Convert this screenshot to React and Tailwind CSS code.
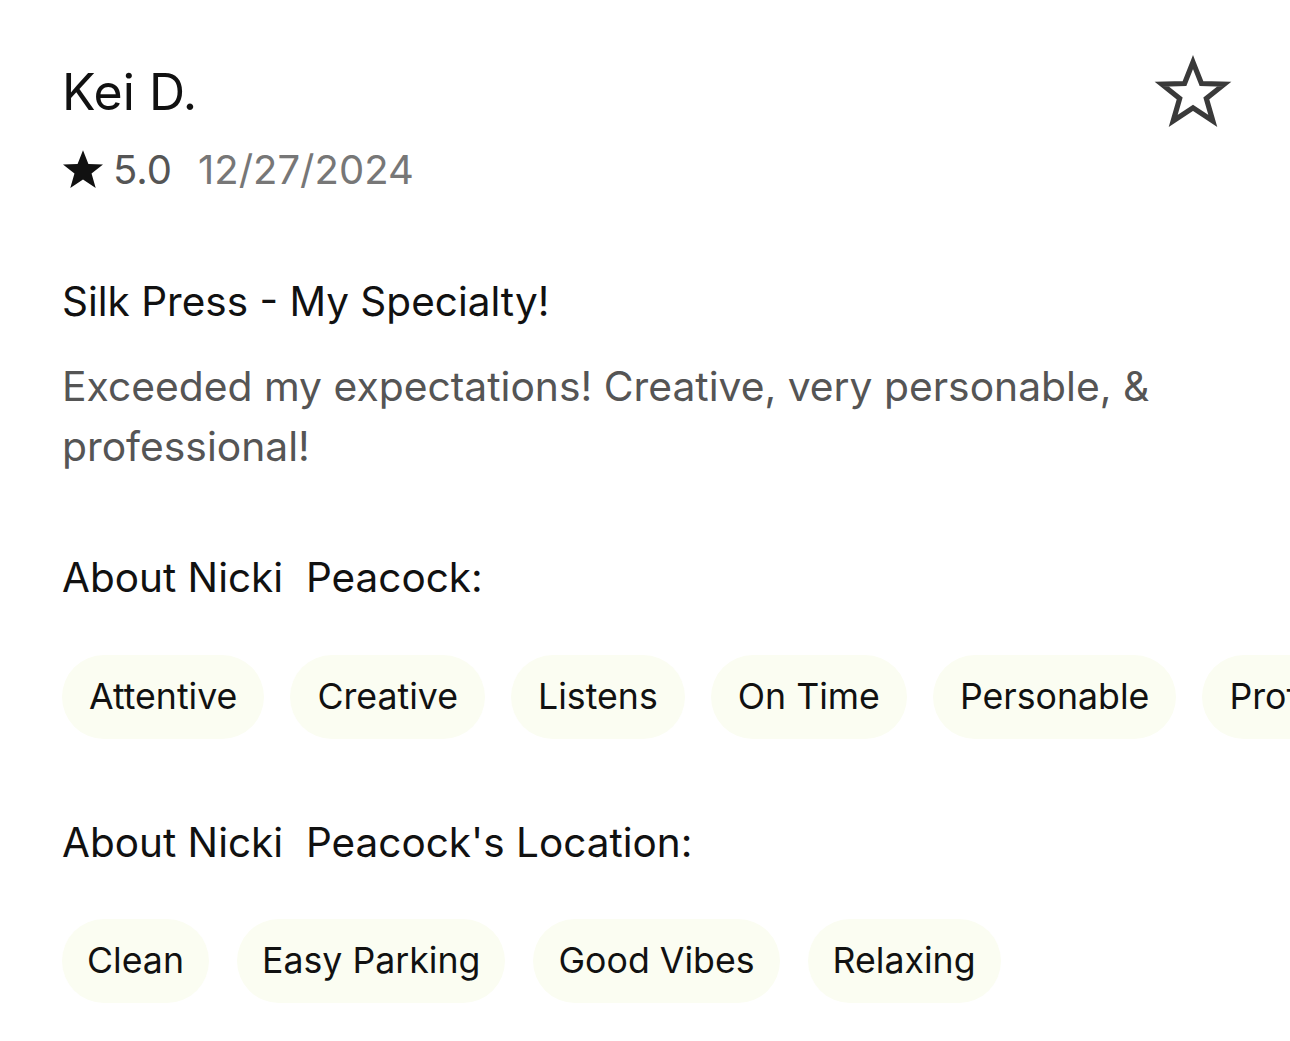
import React from "react";

const Star = ({ filled, className }) => (
  <svg viewBox="0 0 24 24" className={className} fill={filled ? "currentColor" : "none"} stroke="currentColor" strokeWidth={filled ? 0 : 1.6} strokeLinejoin="miter">
    <path d="M12 2.5 L14.6 9.1 L21.6 9.3 L16.1 13.7 L18.1 20.6 L12 16.6 L5.9 20.6 L7.9 13.7 L2.4 9.3 L9.4 9.1 Z" />
  </svg>
);

const Chip = ({ children, wide }) => (
  <div className={`shrink-0 h-[84px] ${wide ? "px-[27px]" : "px-[25px]"} rounded-full bg-[#fbfdf2] flex items-center text-[35.7px] text-[#111] whitespace-nowrap`}>
    {children}
  </div>
);

export default function App() {
  const about = ["Attentive", "Creative", "Listens", "On Time", "Personable", "Professional"];
  const loc = ["Clean", "Easy Parking", "Good Vibes", "Relaxing"];
  return (
    <div className="w-[1290px] h-[1041px] bg-white overflow-hidden pl-[62px] relative" style={{ fontFamily: "Inter, 'Noto Sans', sans-serif" }}>
      <div className="absolute right-[58px] top-[54px] text-[#3a3a3a]">
        <Star className="w-[78px] h-[78px]" />
      </div>
      <div className="pt-[62px] text-[50px] leading-[60px] text-[#111]">Kei D.</div>
      <div className="mt-[23px] flex items-center text-[40px] leading-[50px]">
        <Star filled className="w-[50px] h-[50px] text-[#111] -ml-[4px]" />
        <span className="text-[#555] ml-[5px]">5.0</span>
        <span className="text-[#777] ml-[26px]">12/27/2024</span>
      </div>
      <div className="mt-[82px] text-[40.5px] leading-[50px] text-[#111]">Silk Press - My Specialty!</div>
      <div className="mt-[29px] text-[40.8px] leading-[60px] text-[#555] w-[1150px]">
        Exceeded my expectations! Creative, very personable, &amp; professional!
      </div>
      <div className="mt-[77px] text-[40.5px] leading-[50px] text-[#111] whitespace-pre">About Nicki  Peacock:</div>
      <div className="mt-[52px] flex gap-[26px] overflow-hidden">
        {about.map((a) => <Chip key={a} wide>{a}</Chip>)}
      </div>
      <div className="mt-[79px] text-[40.5px] leading-[50px] text-[#111] whitespace-pre">About Nicki  Peacock's Location:</div>
      <div className="mt-[51px] flex gap-[28px] overflow-hidden">
        {loc.map((a) => <Chip key={a}>{a}</Chip>)}
      </div>
    </div>
  );
}
